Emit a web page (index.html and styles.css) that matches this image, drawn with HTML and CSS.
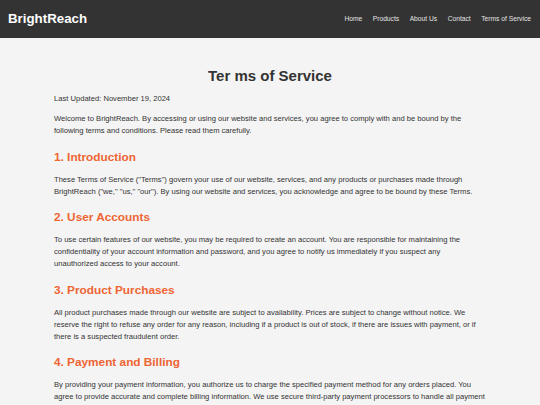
FILE: index.html
```html
<!DOCTYPE html>
<html>
	<head>
		<meta charset="UTF-8">
		<title>Terms of Service - BrightReach</title>
		<link rel="stylesheet" href="styles.css">
	</head>
	<body>
		<div class="header">
			<div class="logo">BrightReach</div>
			<ul class="nav">
				<li><a href="#">Home</a></li>
				<li><a href="#">Products</a></li>
				<li><a href="#">About Us</a></li>
				<li><a href="#">Contact</a></li>
				<li><a href="#">Terms of Service</a></li>
			</ul>
		</div>
		<div class="main">
			<h1>Ter ms of Service</h1>
			<p>Last Updated: November 19, 2024</p>
			<p>Welcome to BrightReach. By accessing or using our website and services, you agree to comply with and be bound by the following terms and conditions. Please read them carefully.</p>

			<h2>1. Introduction</h2>
			<p>These Terms of Service ("Terms") govern your use of our website, services, and any products or purchases made through BrightReach ("we," "us," "our"). By using our website and services, you acknowledge and agree to be bound by these Terms.</p>

			<h2>2. User Accounts</h2>
			<p>To use certain features of our website, you may be required to create an account. You are responsible for maintaining the confidentiality of your account information and password, and you agree to notify us immediately if you suspect any unauthorized access to your account.</p>

			<h2>3. Product Purchases</h2>
			<p>All product purchases made through our website are subject to availability. Prices are subject to change without notice. We reserve the right to refuse any order for any reason, including if a product is out of stock, if there are issues with payment, or if there is a suspected fraudulent order.</p>

			<h2>4. Payment and Billing</h2>
			<p>By providing your payment information, you authorize us to charge the specified payment method for any orders placed. You agree to provide accurate and complete billing information. We use secure third-party payment processors to handle all payment transactions.</p>
		</div>
	</body>
</html>
```

FILE: styles.css
```css
*{
	margin: 0;
	padding: 0;
	list-style: none;
}
body{
	background-color: #f4f4f4;
	color: #333333;
	font-family: "Liberation Sans", Arial, sans-serif;
	font-size: 7.6px;
	line-height: 12px;
}
.header{
	height: 38px;
	background-color: #333333;
	display: flex;
	align-items: center;
	justify-content: space-between;
	padding: 0 9px 0 8px;
}
.logo{
	font-size: 13.3px;
	font-weight: bold;
	color: #ffffff;
}
.nav{
	display: flex;
	gap: 10.5px;
}
.nav a{
	text-decoration: none;
	font-size: 6.7px;
	color: #e4e4e4;
}
.main{
	padding: 29px 54px 20px;
}
.main h1{
	font-size: 15px;
	line-height: 18px;
	text-align: center;
	margin-bottom: 8px;
}
.main h2{
	font-size: 11.8px;
	line-height: 18px;
	color: #ee6533;
	margin: 10.5px 0 8px;
}
.main p{
	margin-bottom: 8px;
}
```
